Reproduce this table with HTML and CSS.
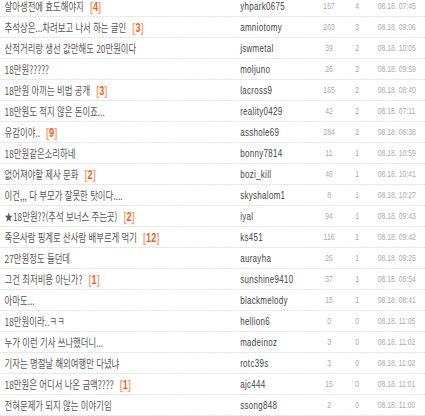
FILE: index.html
```html
<!DOCTYPE html>
<html lang="ko">
<head>
<meta charset="utf-8">
<link rel="stylesheet" href="styles.css">
</head>
<body>
<div class="frame">
<div class="board">
  <ul class="list">
    <li class="row"><span class="title">살아생전에 효도해야지<em class="cnt">[<b>4</b>]</em></span><span class="author">yhpark0675</span><span class="views">157</span><span class="cmts">4</span><span class="date">08.18. 07:45</span></li>
    <li class="row"><span class="title">추석상은...차려보고 나서 하는 글인<em class="cnt">[<b>3</b>]</em></span><span class="author">amniotomy</span><span class="views">203</span><span class="cmts">3</span><span class="date">08.18. 09:06</span></li>
    <li class="row"><span class="title">산적거리랑 생선 값만해도 20만원이다</span><span class="author">jswmetal</span><span class="views">39</span><span class="cmts">2</span><span class="date">08.18. 10:05</span></li>
    <li class="row"><span class="title">18만원?????</span><span class="author">moljuno</span><span class="views">26</span><span class="cmts">2</span><span class="date">08.18. 09:59</span></li>
    <li class="row"><span class="title">18만원 아끼는 비법 공개<em class="cnt">[<b>3</b>]</em></span><span class="author">lacross9</span><span class="views">165</span><span class="cmts">2</span><span class="date">08.18. 08:40</span></li>
    <li class="row"><span class="title">18만원도 적지 않은 돈이죠...</span><span class="author">reality0429</span><span class="views">42</span><span class="cmts">2</span><span class="date">08.18. 07:11</span></li>
    <li class="row"><span class="title">유감이야..<em class="cnt">[<b>9</b>]</em></span><span class="author">asshole69</span><span class="views">284</span><span class="cmts">2</span><span class="date">08.18. 06:38</span></li>
    <li class="row"><span class="title">18만원같은소리하네</span><span class="author">bonny7814</span><span class="views">11</span><span class="cmts">1</span><span class="date">08.18. 10:59</span></li>
    <li class="row"><span class="title">없어져야할 제사 문화<em class="cnt">[<b>2</b>]</em></span><span class="author">bozi_kill</span><span class="views">46</span><span class="cmts">1</span><span class="date">08.18. 10:41</span></li>
    <li class="row"><span class="title">이건,,, 다 부모가 잘못한 탓이다....</span><span class="author">skyshalom1</span><span class="views">8</span><span class="cmts">1</span><span class="date">08.18. 10:27</span></li>
    <li class="row"><span class="title">★18만원??(추석 보너스 주는곳)<em class="cnt">[<b>2</b>]</em></span><span class="author">iyal</span><span class="views">94</span><span class="cmts">1</span><span class="date">08.18. 09:43</span></li>
    <li class="row"><span class="title">죽은사람 핑계로 산사람 배부르게 먹기<em class="cnt">[<b>12</b>]</em></span><span class="author">ks451</span><span class="views">116</span><span class="cmts">1</span><span class="date">08.18. 09:42</span></li>
    <li class="row"><span class="title">27만원정도 들던데</span><span class="author">aurayha</span><span class="views">26</span><span class="cmts">1</span><span class="date">08.18. 09:25</span></li>
    <li class="row"><span class="title">그건 최저비용 아닌가?<em class="cnt">[<b>1</b>]</em></span><span class="author">sunshine9410</span><span class="views">37</span><span class="cmts">1</span><span class="date">08.18. 08:54</span></li>
    <li class="row"><span class="title">아마도...</span><span class="author">blackmelody</span><span class="views">15</span><span class="cmts">1</span><span class="date">08.18. 08:41</span></li>
    <li class="row"><span class="title">18만원이라..ㅋㅋ</span><span class="author">hellion6</span><span class="views">0</span><span class="cmts">0</span><span class="date">08.18. 11:05</span></li>
    <li class="row"><span class="title">누가 이런 기사 쓰나했더니...</span><span class="author">madeinoz</span><span class="views">3</span><span class="cmts">0</span><span class="date">08.18. 11:02</span></li>
    <li class="row"><span class="title">기자는 명절날 해외여행만 다녔냐</span><span class="author">rotc39s</span><span class="views">3</span><span class="cmts">0</span><span class="date">08.18. 11:02</span></li>
    <li class="row"><span class="title">18만원은 어디서 나온 금액????<em class="cnt">[<b>1</b>]</em></span><span class="author">ajc444</span><span class="views">15</span><span class="cmts">0</span><span class="date">08.18. 11:01</span></li>
    <li class="row"><span class="title">전혀문제가 되지 않는 이야기임</span><span class="author">ssong848</span><span class="views">2</span><span class="cmts">0</span><span class="date">08.18. 11:00</span></li>
  </ul>
</div>
</div>
</body>
</html>
```
FILE: styles.css
```css
html, body {
  margin: 0;
  padding: 0;
  background: #fff;
  overflow: hidden;
}
.frame {
  width: 425px;
  height: 416px;
  overflow: hidden;
}
.board {
  width: 559px;
  transform: scaleX(0.76);
  transform-origin: 0 0;
  margin-top: -4px;
}
.list {
  list-style: none;
  margin: 0;
  padding: 0;
}
.row {
  display: flex;
  align-items: center;
  height: 20px;
  border-bottom: 1px dotted #d4d4d4;
  white-space: nowrap;
}
.title {
  width: 310px;
  padding-left: 6px;
  overflow: hidden;
  font-family: "Noto Sans CJK KR", "Liberation Sans", sans-serif;
  font-size: 11px;
  line-height: 14px;
  color: #555;
}
.cnt {
  font-style: normal;
  font-family: "Liberation Sans", Arial, sans-serif;
  font-size: 12px;
  font-weight: bold;
  color: #f9a36f;
  margin-left: 8px;
}
.cnt b {
  color: #ef5f23;
}
.author {
  width: 92px;
  font-family: "Liberation Sans", Arial, sans-serif;
  font-size: 10.5px;
  letter-spacing: 0.4px;
  color: #444;
}
.views, .cmts, .date {
  font-family: "Liberation Sans", Arial, sans-serif;
  font-size: 9px;
  color: #aaa;
}
.views {
  width: 50px;
  text-align: center;
}
.cmts {
  width: 24px;
  text-align: center;
}
.date {
  margin-left: 15px;
  width: 62px;
}
```
